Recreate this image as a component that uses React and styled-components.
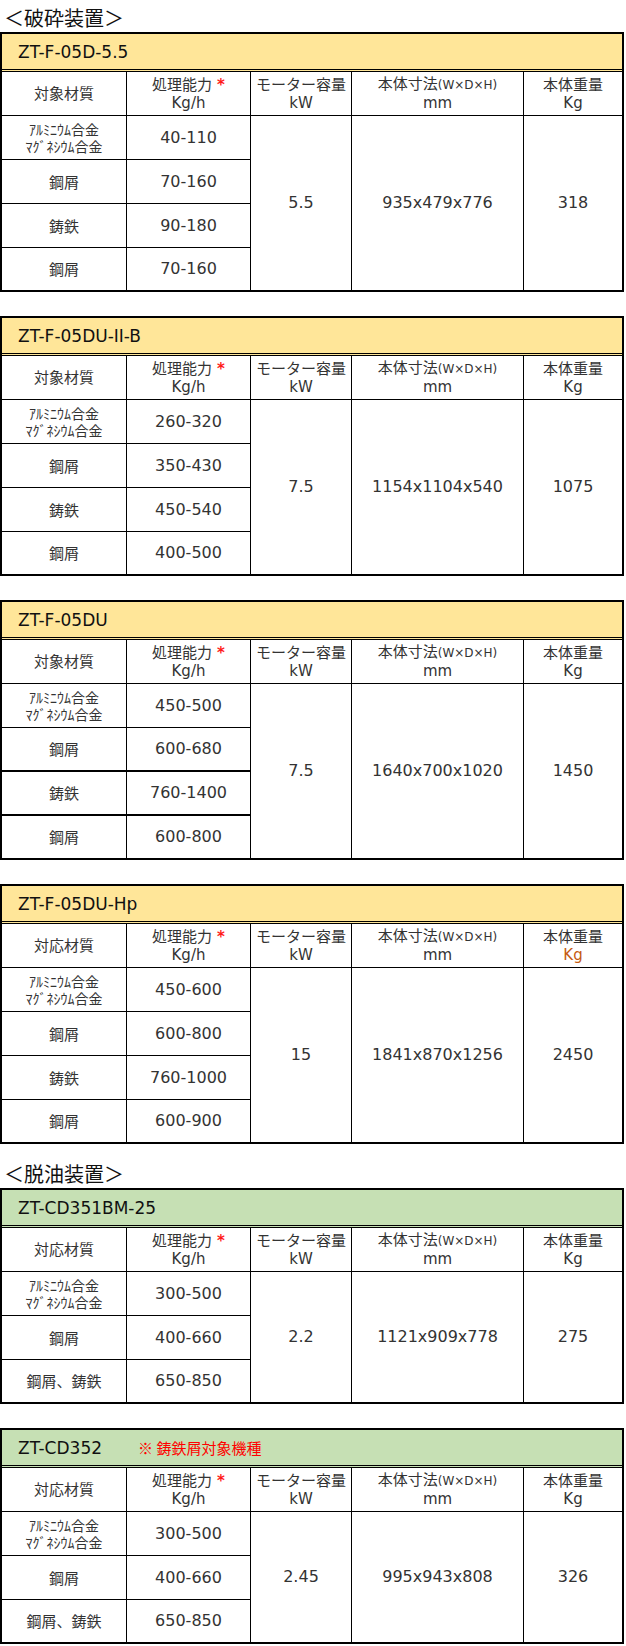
import React from 'react';
import styled, { createGlobalStyle } from 'styled-components';

const GlobalStyle = createGlobalStyle`
  html, body { margin: 0; padding: 0; background: #fff; }
  body {
    font-family: "DejaVu Sans", "Noto Sans CJK JP", sans-serif;
    color: #333;
  }
`;

const Page = styled.main`
  width: 626px;
  display: flex;
  flex-direction: column;
`;

const SectionHeading = styled.h2`
  margin: ${p => (p.$first ? '0' : '12px')} 0 0;
  height: 32px;
  box-sizing: border-box;
  padding: 0 0 4px 4px;
  display: flex;
  align-items: flex-end;
  font-family: "Noto Sans CJK JP", sans-serif;
  font-weight: 400;
  font-size: 20px;
  line-height: 20px;
  color: #111;
`;

const Card = styled.section`
  width: 624px;
  box-sizing: border-box;
  border: 2px solid #000;
  & + & { margin-top: 24px; }
`;

const Title = styled.div`
  height: 35px;
  border-bottom: 3px double #000;
  background: ${p => (p.$tone === 'green' ? '#C6E0B4' : '#FFE699')};
  display: flex;
  align-items: center;
  gap: 36px;
  padding-left: 16px;
`;

const ModelName = styled.span`
  font-size: 17px;
  color: #111;
`;

const Note = styled.span`
  font-family: "Noto Sans CJK JP", sans-serif;
  font-size: 15px;
  color: #ff0000;
`;

const Grid = styled.div`
  display: grid;
  grid-template-columns: 125px 124px 101px 172px 98px;
  grid-template-rows: 44px ${p => `repeat(${p.$rows - 1}, 44px) 42px`};
`;

const Cell = styled.div`
  box-sizing: border-box;
  grid-column: ${p => p.$col};
  grid-row: ${p => p.$row};
  display: flex;
  flex-direction: column;
  align-items: center;
  justify-content: center;
  text-align: center;
  color: #333;
  border-right: ${p => (p.$lastCol ? 'none' : '1px solid #000')};
  border-bottom: ${p => (p.$noBottom ? 'none' : `${p.$thick ? 2 : 1}px solid #000`)};
`;

const HeadCell = styled(Cell)`
  font-size: 15px;
  line-height: 18px;
`;

const HeadLine = styled.span`
  display: block;
  white-space: nowrap;
  color: ${p => p.$tint || '#333'};
`;

const Small = styled.span`
  font-size: 12px;
`;

const Star = styled.span`
  color: #ff1a1a;
  font-weight: 700;
  font-size: 15px;
  margin-left: 5px;
`;

const ValueCell = styled(Cell)`
  font-size: 16px;
  line-height: 20px;
`;

const MaterialCell = styled(Cell)`
  font-family: "Noto Sans CJK JP", sans-serif;
  font-size: 15px;
  line-height: 20px;
`;

const AlloyLine = styled.span`
  display: block;
  font-size: 14px;
  line-height: 17px;
  white-space: nowrap;
`;

const ALLOY = 'alloy';

const sections = [
  {
    heading: '＜破砕装置＞',
    tables: [
      {
        model: 'ZT-F-05D-5.5', tone: 'yellow', target: '対象材質',
        rows: [[ALLOY, '40-110'], ['鋼屑', '70-160'], ['鋳鉄', '90-180'], ['鋼屑', '70-160']],
        motor: '5.5', size: '935x479x776', weight: '318',
      },
      {
        model: 'ZT-F-05DU-II-B', tone: 'yellow', target: '対象材質',
        rows: [[ALLOY, '260-320'], ['鋼屑', '350-430'], ['鋳鉄', '450-540'], ['鋼屑', '400-500']],
        motor: '7.5', size: '1154x1104x540', weight: '1075',
      },
      {
        model: 'ZT-F-05DU', tone: 'yellow', target: '対象材質', thick: [1, 2],
        rows: [[ALLOY, '450-500'], ['鋼屑', '600-680'], ['鋳鉄', '760-1400'], ['鋼屑', '600-800']],
        motor: '7.5', size: '1640x700x1020', weight: '1450',
      },
      {
        model: 'ZT-F-05DU-Hp', tone: 'yellow', target: '対応材質', kgTint: '#c55a11',
        rows: [[ALLOY, '450-600'], ['鋼屑', '600-800'], ['鋳鉄', '760-1000'], ['鋼屑', '600-900']],
        motor: '15', size: '1841x870x1256', weight: '2450',
      },
    ],
  },
  {
    heading: '＜脱油装置＞',
    tables: [
      {
        model: 'ZT-CD351BM-25', tone: 'green', target: '対応材質',
        rows: [[ALLOY, '300-500'], ['鋼屑', '400-660'], ['鋼屑、鋳鉄', '650-850']],
        motor: '2.2', size: '1121x909x778', weight: '275',
      },
      {
        model: 'ZT-CD352', note: '※ 鋳鉄屑対象機種', tone: 'green', target: '対応材質',
        rows: [[ALLOY, '300-500'], ['鋼屑', '400-660'], ['鋼屑、鋳鉄', '650-850']],
        motor: '2.45', size: '995x943x808', weight: '326',
      },
    ],
  },
];

function Material({ value }) {
  if (value === ALLOY) {
    return (
      <>
        <AlloyLine>ｱﾙﾐﾆｳﾑ合金</AlloyLine>
        <AlloyLine>ﾏｸﾞﾈｼｳﾑ合金</AlloyLine>
      </>
    );
  }
  return value;
}

function SpecTable({ t }) {
  const n = t.rows.length;
  const thick = t.thick || [];
  return (
    <Card>
      <Title $tone={t.tone}>
        <ModelName>{t.model}</ModelName>
        {t.note && <Note>{t.note}</Note>}
      </Title>
      <Grid $rows={n}>
        <HeadCell $col="1" $row="1">
          <HeadLine>{t.target}</HeadLine>
        </HeadCell>
        <HeadCell $col="2" $row="1">
          <HeadLine>処理能力<Star>*</Star></HeadLine>
          <HeadLine>Kg/h</HeadLine>
        </HeadCell>
        <HeadCell $col="3" $row="1">
          <HeadLine>モーター容量</HeadLine>
          <HeadLine>kW</HeadLine>
        </HeadCell>
        <HeadCell $col="4" $row="1">
          <HeadLine>本体寸法<Small>(W×D×H)</Small></HeadLine>
          <HeadLine>mm</HeadLine>
        </HeadCell>
        <HeadCell $col="5" $row="1" $lastCol>
          <HeadLine>本体重量</HeadLine>
          <HeadLine $tint={t.kgTint}>Kg</HeadLine>
        </HeadCell>
        {t.rows.map(([mat, cap], i) => {
          const last = i === n - 1;
          const isThick = thick.includes(i);
          return (
            <React.Fragment key={i}>
              <MaterialCell $col="1" $row={`${i + 2}`} $noBottom={last} $thick={isThick}>
                <Material value={mat} />
              </MaterialCell>
              <ValueCell $col="2" $row={`${i + 2}`} $noBottom={last} $thick={isThick}>
                {cap}
              </ValueCell>
            </React.Fragment>
          );
        })}
        <ValueCell $col="3" $row="2 / -1" $noBottom>{t.motor}</ValueCell>
        <ValueCell $col="4" $row="2 / -1" $noBottom>{t.size}</ValueCell>
        <ValueCell $col="5" $row="2 / -1" $noBottom $lastCol>{t.weight}</ValueCell>
      </Grid>
    </Card>
  );
}

export default function App() {
  return (
    <>
      <GlobalStyle />
      <Page>
        {sections.map((s, si) => (
          <React.Fragment key={si}>
            <SectionHeading $first={si === 0}>{s.heading}</SectionHeading>
            {s.tables.map((t, ti) => (
              <SpecTable key={ti} t={t} />
            ))}
          </React.Fragment>
        ))}
      </Page>
    </>
  );
}
